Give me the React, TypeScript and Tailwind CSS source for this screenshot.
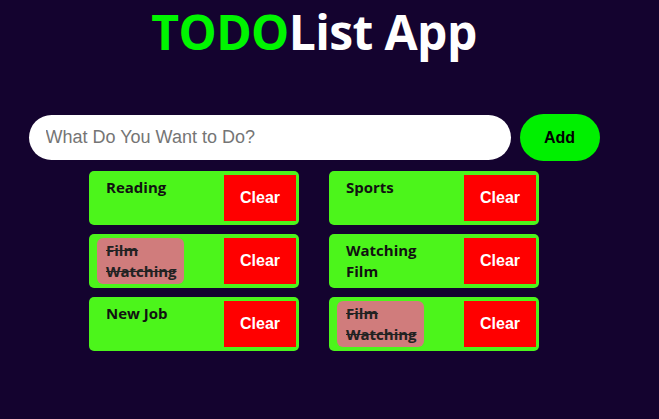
import { useState } from 'react';

type Todo = { id: number; text: string; done: boolean };

const initial: Todo[] = [
  { id: 1, text: 'Reading', done: false },
  { id: 2, text: 'Sports', done: false },
  { id: 3, text: 'Film Watching', done: true },
  { id: 4, text: 'Watching Film', done: false },
  { id: 5, text: 'New Job', done: false },
  { id: 6, text: 'Film Watching', done: true },
];

export default function App() {
  const [todos, setTodos] = useState<Todo[]>(initial);
  const [value, setValue] = useState('');

  const addTodo = () => {
    if (!value.trim()) return;
    setTodos([...todos, { id: Date.now(), text: value.trim(), done: false }]);
    setValue('');
  };

  return (
    <div className="min-h-screen w-full bg-[#14032f]">
      <div className="w-[628px] flex flex-col items-center">
        <h1 className="mt-[4px] text-[48px] leading-[56px] font-bold font-['Open_Sans',sans-serif] tracking-[-0.6px]">
          <span className="text-[#00f500]">TODO</span>
          <span className="text-white">List App</span>
        </h1>

        <div className="mt-[54px] flex items-center gap-[9px]">
          <input
            value={value}
            onChange={(e) => setValue(e.target.value)}
            placeholder="What Do You Want to Do?"
            className="w-[482px] h-[45px] rounded-full bg-white px-[17px] text-[18px] text-black placeholder:text-[#757575] font-['Liberation_Sans',Arial,sans-serif] outline-none"
          />
          <button
            onClick={addTodo}
            className="w-[80px] h-[47px] rounded-full bg-[#00f000] text-[16px] font-bold text-black font-['Liberation_Sans',Arial,sans-serif]"
          >
            Add
          </button>
        </div>

        <div className="mt-[10px] grid grid-cols-[210px_210px] gap-x-[30px] gap-y-[9px]">
          {todos.map((t) => (
            <div
              key={t.id}
              className="h-[54px] rounded-[5px] bg-[#4cf51b] pl-[4px] pr-[3px] py-[4px] flex items-start justify-between"
            >
              <span
                onClick={() =>
                  setTodos(todos.map((x) => (x.id === t.id ? { ...x, done: !x.done } : x)))
                }
                className={`ml-[4px] w-[87px] h-[46px] pl-[9px] pr-[7px] pt-[2px] rounded-[6px] text-[15px] leading-[21px] font-bold font-['Open_Sans',sans-serif] cursor-pointer ${
                  t.done ? 'bg-[#d07c7c] line-through text-[#222]' : 'text-[#111]'
                }`}
              >
                {t.text}
              </span>
              <button
                onClick={() => setTodos(todos.filter((x) => x.id !== t.id))}
                className="w-[72px] h-[46px] bg-[#ff0000] text-white text-[16px] font-bold font-['Liberation_Sans',Arial,sans-serif]"
              >
                Clear
              </button>
            </div>
          ))}
        </div>
      </div>
    </div>
  );
}
